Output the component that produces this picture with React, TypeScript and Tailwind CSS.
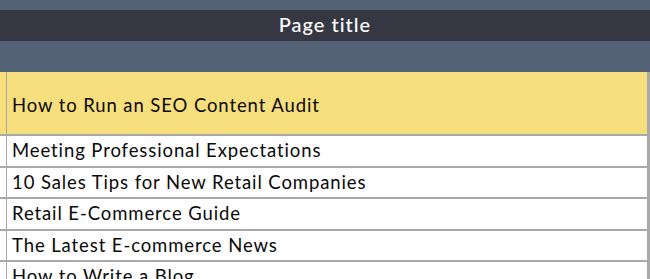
import React from "react";

const ROWS = [
  "Meeting Professional Expectations",
  "10 Sales Tips for New Retail Companies",
  "Retail E-Commerce Guide",
  "The Latest E-commerce News",
  "How to Write a Blog",
];

export default function App() {
  return (
    <div className="w-[650px] h-[279px] overflow-hidden bg-white font-['Lato','Open_Sans',sans-serif] text-[#0a0a0a]">
      <div className="h-[10px] bg-[#536375]" />
      <div className="h-[31px] bg-[#353743] flex items-center justify-center pb-[3px] text-white text-[20px] tracking-[1px] font-medium">
        Page title
      </div>
      <div className="h-[31px] bg-[#536375]" />

      <div className="flex h-[64px] border-b-2 border-[#a9a9a9] bg-[#f8df7e] border-r-[3px]">
        <div className="w-[6px] shrink-0" />
        <div className="flex-1 flex items-center border-l border-[#a9a9a9] pl-[5px] pt-[5px] text-[18.5px] tracking-[0.9px]">
          How to Run an SEO Content Audit
        </div>
      </div>

      {ROWS.map((title) => (
        <div key={title} className="flex h-[31.6px] border-b-2 border-[#a9a9a9] border-r-[3px]">
          <div className="w-[6px] shrink-0" />
          <div className="flex-1 flex items-center border-l border-[#a9a9a9] pl-[5px] text-[18.5px] tracking-[0.9px] whitespace-nowrap">
            {title}
          </div>
        </div>
      ))}
    </div>
  );
}
